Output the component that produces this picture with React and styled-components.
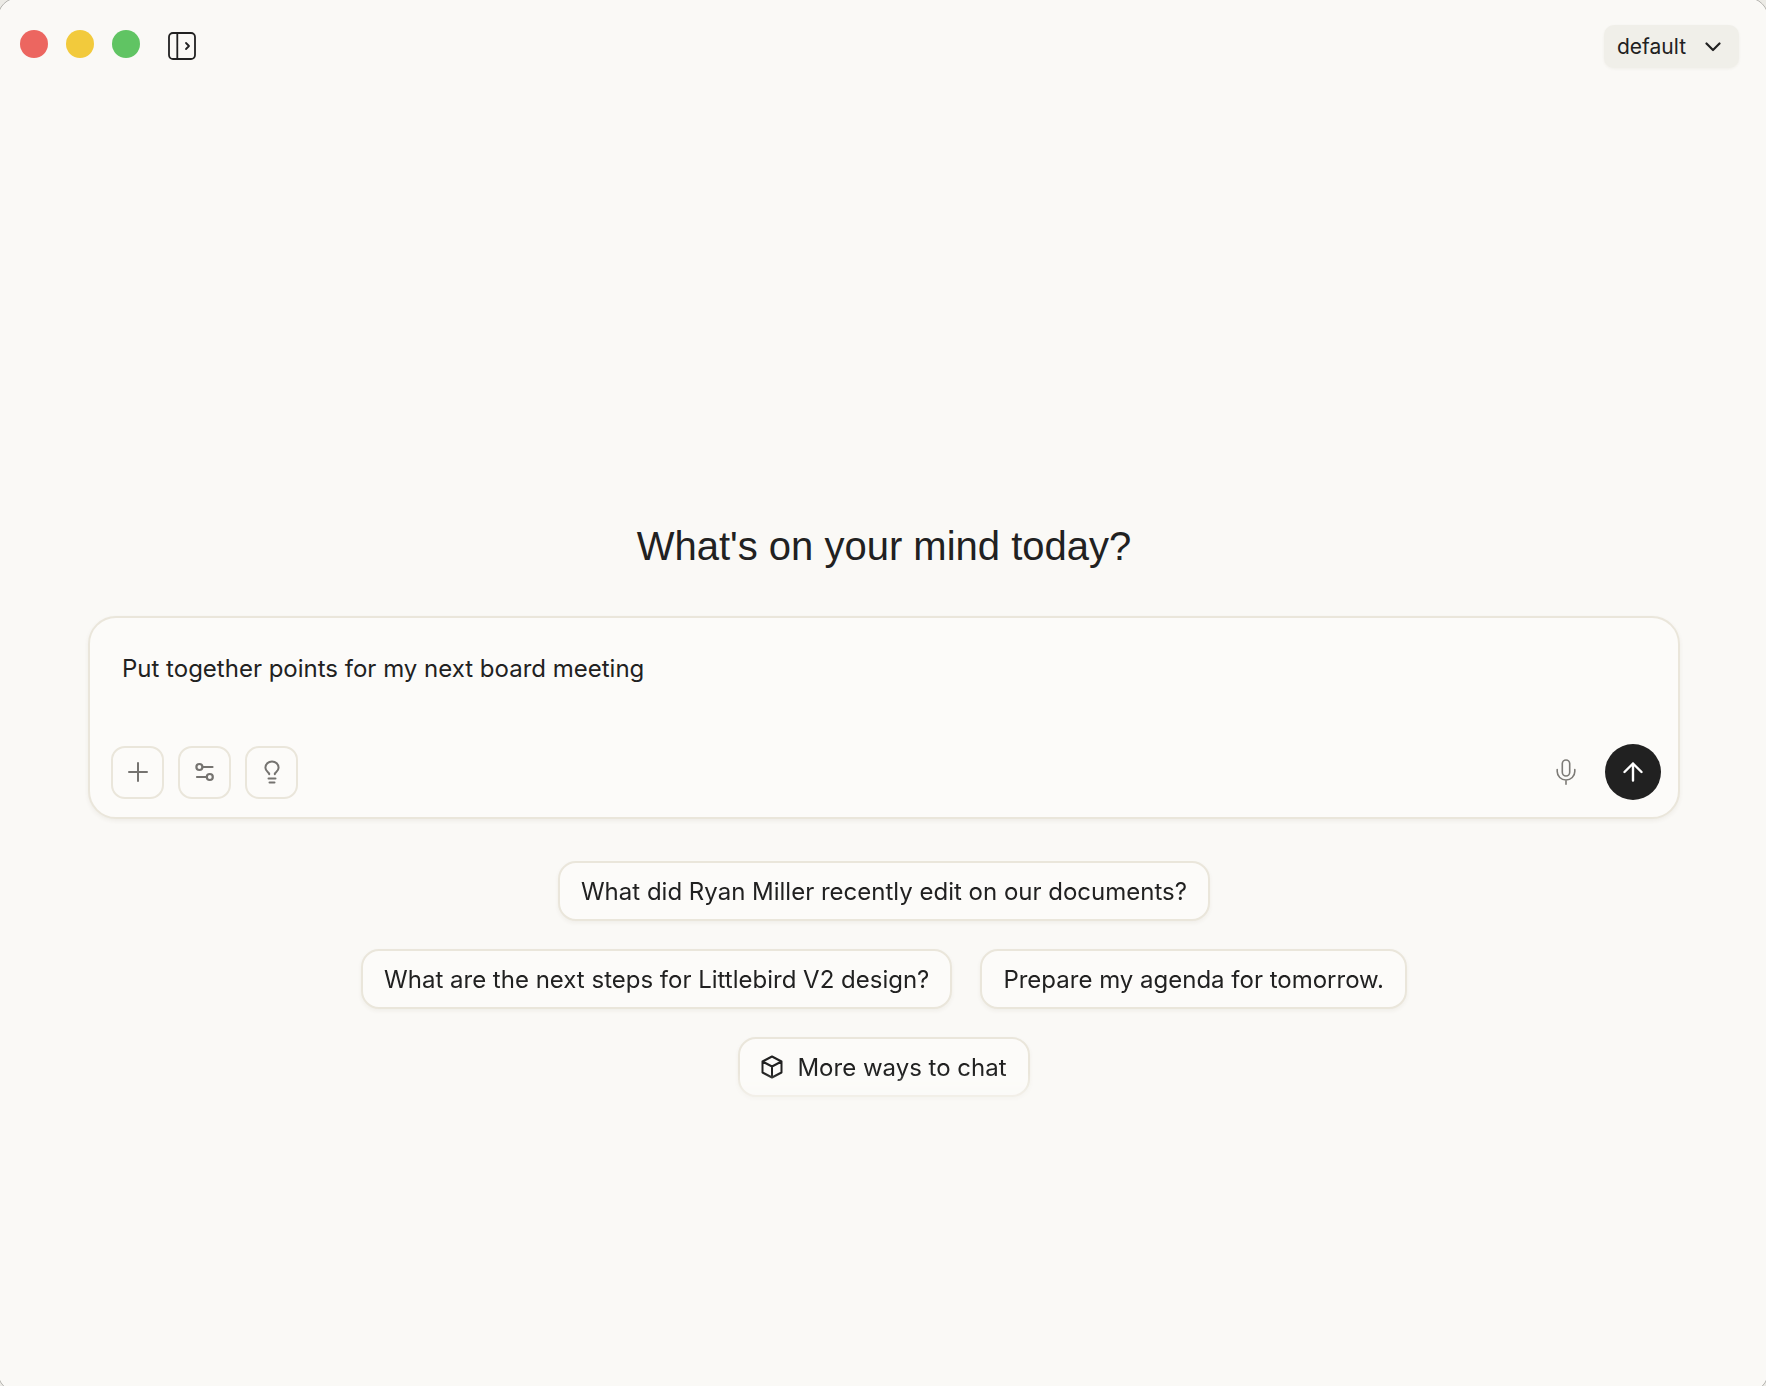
import React, { useState } from 'react';
import styled, { createGlobalStyle } from 'styled-components';

const GlobalStyle = createGlobalStyle`
  * {
    box-sizing: border-box;
  }

  body {
    margin: 0;
    overflow: hidden;
    background-color: #ecebe6;
    color: #212121;
    font-family: Inter, 'Liberation Sans', sans-serif;
  }

  button, select, textarea {
    font-family: inherit;
    color: inherit;
  }

  svg {
    display: block;
    fill: none;
    stroke: currentColor;
    stroke-linecap: round;
    stroke-linejoin: round;
  }
`;

const Window = styled.div`
  display: flex;
  flex-direction: column;
  min-height: calc(100vh + 10px);
  margin: -3px;
  padding: 2px;
  border: 1px solid #b5b4b0;
  border-radius: 22px;
  background-color: #faf9f6;
`;

const TitleBar = styled.header`
  display: flex;
  align-items: flex-start;
  justify-content: space-between;
  height: 92px;
  padding: 25px 27px 0 20px;
`;

const WindowControls = styled.div`
  display: flex;
  align-items: flex-start;
  gap: 18px;
  padding-top: 5px;
`;

const TrafficLight = styled.button`
  width: 28px;
  height: 28px;
  padding: 0;
  border: none;
  border-radius: 50%;
  background-color: ${({ $color }) => $color};
`;

const SidebarButton = styled.button`
  margin: 2px 0 0 10px;
  padding: 0;
  border: none;
  background: none;
`;

const ProfilePicker = styled.div`
  display: grid;
  align-items: center;
  border-radius: 10px;
  background-color: #f0efe9;
  box-shadow: 0 1px 3px rgba(80, 70, 40, 0.06);

  > * {
    grid-area: 1 / 1;
  }

  svg {
    justify-self: end;
    margin-right: 18px;
    pointer-events: none;
  }
`;

const ProfileSelect = styled.select`
  height: 43px;
  padding: 0 52px 0 13px;
  border: none;
  background: none;
  appearance: none;
  font-size: 21px;
`;

const Main = styled.main`
  display: flex;
  flex: 1;
  flex-direction: column;
  align-items: center;
  justify-content: center;
  padding: 141px 86px 0 88px;
`;

const Title = styled.h1`
  margin: 0 0 46px;
  font-family: 'Liberation Sans', Arial, sans-serif;
  font-size: 40px;
  font-weight: 400;
  line-height: 48px;
`;

const Composer = styled.form`
  width: 100%;
  padding: 33px 17px 17px 21px;
  border: 2px solid #eae6db;
  border-radius: 28px;
  background-color: #fcfbf9;
  box-shadow: 0 2px 4px rgba(80, 70, 40, 0.07);
`;

const Prompt = styled.textarea`
  display: block;
  width: 100%;
  height: 93px;
  padding: 0 11px;
  border: none;
  outline: none;
  resize: none;
  background: none;
  font-size: 24px;
  line-height: 36px;
`;

const Toolbar = styled.div`
  display: flex;
  align-items: center;
  justify-content: space-between;
`;

const ToolGroup = styled.div`
  display: flex;
  align-items: center;
  gap: ${({ $gap }) => $gap}px;
`;

const ToolButton = styled.button`
  display: grid;
  place-items: center;
  width: 53px;
  height: 53px;
  padding: 0;
  border: 2px solid #eae6db;
  border-radius: 14px;
  background: none;
  color: #757370;
`;

const MicButton = styled.button`
  padding: 0;
  border: none;
  background: none;
  color: #7d7b77;
`;

const SendButton = styled.button`
  display: grid;
  place-items: center;
  width: 56px;
  height: 56px;
  padding: 0;
  border: none;
  border-radius: 50%;
  background-color: #212121;
  color: #ffffff;
`;

const Suggestions = styled.div`
  display: flex;
  flex-wrap: wrap;
  justify-content: center;
  gap: 28px;
  max-width: 1160px;
  margin-top: 42px;
  padding-bottom: 4px;
  mask-image: linear-gradient(to top, rgba(0, 0, 0, 0.4), #000 28px);
`;

const Chip = styled.button`
  display: flex;
  align-items: center;
  gap: 14px;
  height: 60px;
  padding: 0 21px;
  border: 2px solid #eae6db;
  border-radius: 18px;
  background-color: #fcfbf9;
  box-shadow: 0 2px 4px rgba(80, 70, 40, 0.06);
  font-size: 24px;
`;

const SidebarIcon = () => (
  <svg width="28" height="28" viewBox="0 0 28 28" strokeWidth="1.8">
    <rect x="1" y="1" width="26" height="26" rx="4" />
    <path d="M9.3 1v26M18 11l3 3-3 3" />
  </svg>
);

const ChevronIcon = () => (
  <svg width="16" height="10" viewBox="0 0 16 10" strokeWidth="2.2">
    <path d="M1.5 1.5 8 8l6.5-6.5" />
  </svg>
);

const PlusIcon = () => (
  <svg width="20" height="20" viewBox="0 0 20 20" strokeWidth="2">
    <path d="M10 1v18M1 10h18" />
  </svg>
);

const SlidersIcon = () => (
  <svg width="20" height="20" viewBox="0 0 20 20" strokeWidth="2.2">
    <circle cx="4.4" cy="5" r="3" />
    <circle cx="14.8" cy="15" r="3" />
    <path d="M8 5h9.500M2 15h9.500" />
  </svg>
);

const BulbIcon = () => (
  <svg width="18" height="24" viewBox="0 0 18 24" strokeWidth="2">
    <path d="M6.2 14.2v-.6C5.7 12.200 2.400 11.100 2.400 7.700 2.400 4.100 5.300 1.400 9 1.400s6.600 2.700 6.600 6.300c0 3.400-3.300 4.500-3.800 5.900v.6M5.500 18.500h7M6.500 22.500h5" />
  </svg>
);

const MicIcon = () => (
  <svg width="20" height="26" viewBox="0 0 20 26" strokeWidth="1.6">
    <rect x="6.300" y="1" width="7.400" height="16" rx="3.700" />
    <path d="M1.200 10.500v2c0 4.700 3.900 8.500 8.800 8.500s8.800-3.800 8.800-8.500v-2M10 21v4.200" />
  </svg>
);

const ArrowIcon = () => (
  <svg width="20" height="20" viewBox="0 0 20 20" strokeWidth="2.4">
    <path d="M10 18.500v-17M1.500 10 10 1.500l8.500 8.500" />
  </svg>
);

const BoxIcon = () => (
  <svg width="22" height="24" viewBox="0 0 22 24" strokeWidth="2">
    <path d="m11 1.500 9.500 5v11l-9.500 5-9.500-5v-11zM1.500 6.500l9.500 5 9.500-5M11 11.500v11" />
  </svg>
);

const trafficLights = [
  { label: 'Close', color: '#ec6660' },
  { label: 'Minimize', color: '#f2ca3c' },
  { label: 'Zoom', color: '#60c463' },
];

const suggestions = [
  'What did Ryan Miller recently edit on our documents?',
  'What are the next steps for Littlebird V2 design?',
  'Prepare my agenda for tomorrow.',
];

const App = () => {
  const [prompt, setPrompt] = useState('Put together points for my next board meeting');

  return (
    <>
      <GlobalStyle />
      <Window>
        <TitleBar>
          <WindowControls>
            {trafficLights.map(({ label, color }) => (
              <TrafficLight key={label} $color={color} aria-label={label} />
            ))}
            <SidebarButton aria-label="Open sidebar">
              <SidebarIcon />
            </SidebarButton>
          </WindowControls>
          <ProfilePicker>
            <ProfileSelect aria-label="Profile" defaultValue="default">
              <option value="default">default</option>
            </ProfileSelect>
            <ChevronIcon />
          </ProfilePicker>
        </TitleBar>

        <Main>
          <Title>What's on your mind today?</Title>

          <Composer onSubmit={(e) => e.preventDefault()}>
            <Prompt
              aria-label="Message"
              spellCheck={false}
              value={prompt}
              onChange={(e) => setPrompt(e.target.value)}
            />
            <Toolbar>
              <ToolGroup $gap={14}>
                <ToolButton type="button" aria-label="Add"><PlusIcon /></ToolButton>
                <ToolButton type="button" aria-label="Settings"><SlidersIcon /></ToolButton>
                <ToolButton type="button" aria-label="Ideas"><BulbIcon /></ToolButton>
              </ToolGroup>
              <ToolGroup $gap={29}>
                <MicButton type="button" aria-label="Dictate"><MicIcon /></MicButton>
                <SendButton type="submit" aria-label="Send"><ArrowIcon /></SendButton>
              </ToolGroup>
            </Toolbar>
          </Composer>

          <Suggestions>
            {suggestions.map((text) => (
              <Chip key={text} type="button" onClick={() => setPrompt(text)}>{text}</Chip>
            ))}
            <Chip type="button">
              <BoxIcon />
              More ways to chat
            </Chip>
          </Suggestions>
        </Main>
      </Window>
    </>
  );
};

export default App;
